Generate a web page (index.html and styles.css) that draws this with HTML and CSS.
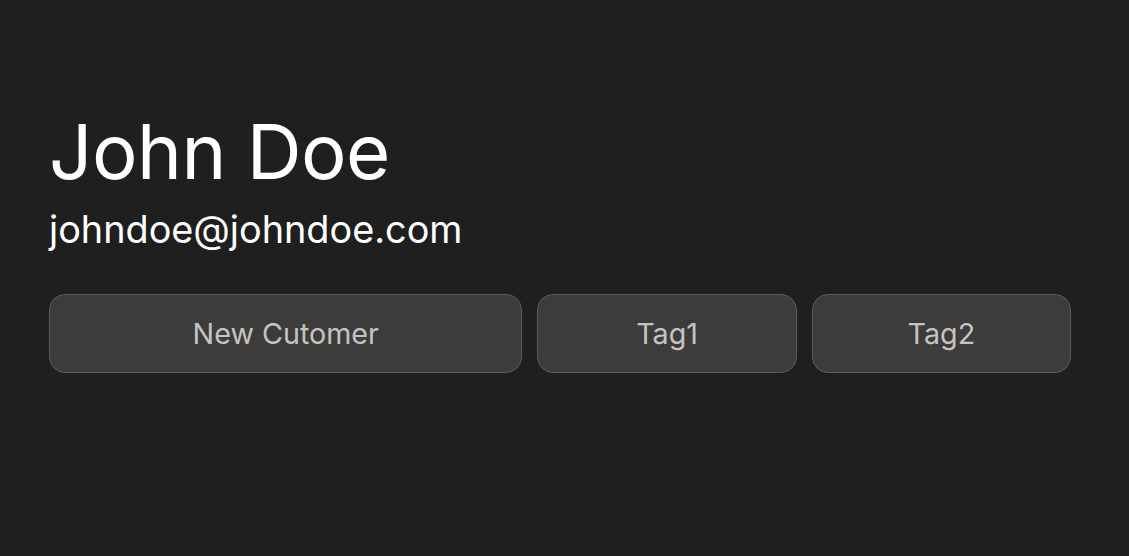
FILE: index.html
```html
<!DOCTYPE html>
<html>
<head>
<meta charset="utf-8">
<link rel="stylesheet" href="styles.css">
</head>
<body>
<main class="profile">
  <h1 class="name">John Doe</h1>
  <p class="email">johndoe@johndoe.com</p>
  <div class="tags">
    <span class="tag">New Cutomer</span>
    <span class="tag">Tag1</span>
    <span class="tag">Tag2</span>
  </div>
</main>
</body>
</html>
```
FILE: styles.css
```css
html, body {
  margin: 0;
  padding: 0;
  background: #1f1f1f;
  height: 100%;
}
body {
  font-family: Inter, "Noto Sans", sans-serif;
  color: #ffffff;
}
.profile {
  padding: 103px 0 0 49px;
  width: 1022px;
}
.name {
  margin: 0;
  font-size: 76px;
  font-weight: 400;
  line-height: 96px;
  letter-spacing: -0.5px;
}
.email {
  margin: 6px 0 0;
  font-size: 37.8px;
  font-weight: 400;
  line-height: 48px;
}
.tags {
  margin-top: 41px;
  display: grid;
  grid-template-columns: 473fr 259fr 259fr;
  gap: 15px;
}
.tag {
  height: 77px;
  display: flex;
  align-items: center;
  justify-content: center;
  background: #3d3c3b;
  border: 1px solid #5c5b5a;
  border-radius: 16px;
  color: #c4c4c4;
  font-size: 28.7px;
}
```
